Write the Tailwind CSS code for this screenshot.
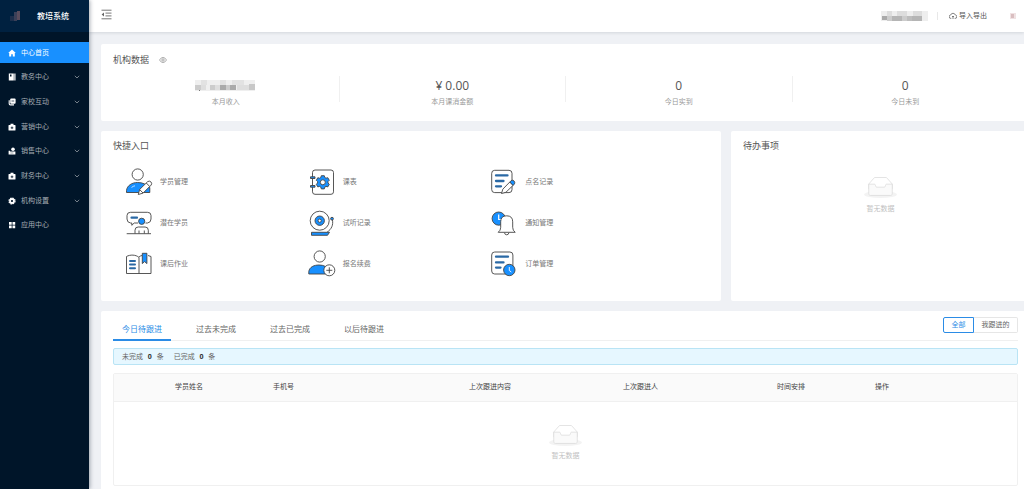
<!DOCTYPE html>
<html lang="zh-CN">
<head>
<meta charset="utf-8">
<title>教培系统</title>
<script src="https://cdn.jsdelivr.net/npm/@tailwindcss/browser@4"></script>
</head>
<body class="flex min-h-screen overflow-x-hidden bg-[#eff1f5] font-['Open_Sans','Noto_Sans_CJK_SC',sans-serif] text-[7px] leading-[12px] text-[#666]">

<svg class="hidden" aria-hidden="true">
  <symbol id="empty" viewBox="0 0 64 41">
    <g transform="translate(0 1)" fill="none">
      <ellipse fill="#f3f3f3" cx="32" cy="33" rx="32" ry="7"/>
      <g stroke="#d9d9d9" stroke-width="1.400">
        <path fill="#fff" d="M55 12.760L44.854 1.258C44.367.474 43.656 0 42.907 0H21.093c-.749 0-1.460.474-1.947 1.257L9 12.761V22h46v-9.240z"/>
        <path fill="#fafafa" d="M41.613 15.931c0-1.605.994-2.930 2.227-2.931H55v18.137C55 33.260 53.680 35 52.050 35h-40.100C10.320 35 9 33.259 9 31.137V13h11.160c1.233 0 2.227 1.323 2.227 2.928v.022c0 1.605 1.005 2.901 2.237 2.901h14.752c1.232 0 2.237-1.308 2.237-2.913v-.007z"/>
      </g>
    </g>
  </symbol>
  <symbol id="chev" viewBox="0 0 6 6"><path d="M.8 1.800L3 4l2.200-2.200" fill="none" stroke="currentColor" stroke-width=".7"/></symbol>
  <symbol id="bag" viewBox="0 0 8 8"><path d="M2.500 2V.8h3V2H7q.5 0 .5.500v4.500q0 .6-.6.6H1.100q-.6 0-.6-.6V2.500Q.5 2 1 2z" fill="currentColor"/><path d="M4 3.500v2.600M2.700 4.800h2.600" stroke="#001529" stroke-width=".8"/></symbol>
</svg>

<aside class="z-10 w-[89px] shrink-0 bg-[#001529] text-[#a6adb4] shadow-[1px_0_4px_rgba(0,21,41,0.35)]">
  <div class="flex h-8 items-center gap-4 bg-[#002140] pl-[10px] text-[8px] font-medium text-white">
    <svg class="size-[11px]" viewBox="0 0 11 11"><path fill="#1d2f4c" d="M0 5h4v5H0z"/><path fill="#3b4058" d="M4 1h3v9H4z"/><path fill="#594c5c" d="M7 0h3v9H7z"/></svg>
    <span>教培系统</span>
  </div>
  <nav class="mt-[10px]">
    <ul class="flex h-[194px] flex-col justify-between">
      <li><a href="#" class="flex h-[21px] items-center gap-[5px] bg-[#1890ff] pr-[9px] pl-2 text-white">
        <svg class="size-2" viewBox="0 0 8 8"><path fill="currentColor" d="M4 .4L.2 4h1v3.500h2V5.200h1.600v2.300h2V4h1z"/></svg><span>中心首页</span></a></li>
      <li><a href="#" class="flex h-[21px] items-center gap-[5px] pr-[9px] pl-2">
        <svg class="size-2 text-white" viewBox="0 0 8 8"><path fill="currentColor" d="M.8.6h5v6.900h-5zM6.300.6h1.200v6.900H6.300z"/><path fill="#001529" d="M2 1.500h1.500v2H2z"/></svg><span>教务中心</span><svg class="ml-auto size-[6px]"><use href="#chev"/></svg></a></li>
      <li><a href="#" class="flex h-[21px] items-center gap-[5px] pr-[9px] pl-2">
        <svg class="size-2 text-white" viewBox="0 0 8 8"><rect x="2.200" y=".5" width="5.400" height="5.200" rx="1" fill="currentColor"/><path d="M1.200 2.200v3.500q0 1.200 1.200 1.200h3.600" fill="none" stroke="currentColor" stroke-width="1.100"/><path d="M3.500 3h2.700" stroke="#001529" stroke-width=".7"/></svg><span>家校互动</span><svg class="ml-auto size-[6px]"><use href="#chev"/></svg></a></li>
      <li><a href="#" class="flex h-[21px] items-center gap-[5px] pr-[9px] pl-2">
        <svg class="size-2 text-white"><use href="#bag"/></svg><span>营销中心</span><svg class="ml-auto size-[6px]"><use href="#chev"/></svg></a></li>
      <li><a href="#" class="flex h-[21px] items-center gap-[5px] pr-[9px] pl-2">
        <svg class="size-2 text-white" viewBox="0 0 8 8"><circle cx="5" cy="2.300" r="1.800" fill="currentColor"/><path fill="currentColor" d="M.6 3.800h1.500v.8h5.300v2.900H.6z"/><path d="M2.400 6h3" stroke="#001529" stroke-width=".4"/></svg><span>销售中心</span><svg class="ml-auto size-[6px]"><use href="#chev"/></svg></a></li>
      <li><a href="#" class="flex h-[21px] items-center gap-[5px] pr-[9px] pl-2">
        <svg class="size-2 text-white"><use href="#bag"/></svg><span>财务中心</span><svg class="ml-auto size-[6px]"><use href="#chev"/></svg></a></li>
      <li><a href="#" class="flex h-[21px] items-center gap-[5px] pr-[9px] pl-2">
        <svg class="size-2 text-white" viewBox="0 0 8 8"><circle cx="4" cy="4" r="2" fill="none" stroke="currentColor" stroke-width="1.800"/><circle cx="4" cy="4" r="3" fill="none" stroke="currentColor" stroke-width="1.200" stroke-dasharray="1.570 .785"/></svg><span>机构设置</span><svg class="ml-auto size-[6px]"><use href="#chev"/></svg></a></li>
      <li><a href="#" class="flex h-[21px] items-center gap-[5px] pr-[9px] pl-2">
        <svg class="size-2 text-white" viewBox="0 0 8 8"><path fill="currentColor" d="M1 1h2.700v2.700H1zM4.500 1h2.700v2.700H4.500zM1 4.500h2.700v2.700H1zM4.500 4.500h2.700v2.700H4.500z"/></svg><span>应用中心</span></a></li>
    </ul>
  </nav>
</aside>

<div class="flex min-w-0 flex-1 flex-col">
  <header class="flex h-8 items-center bg-white pl-3 shadow-[0_1px_3px_rgba(0,21,41,0.12)]">
    <button type="button" aria-label="收起菜单" class="pb-[3px]"><svg class="size-[11px]" viewBox="0 0 11 11" fill="none" stroke="#666" stroke-width=".9"><path d="M.5 1.200h10M4.500 4.100h6M4.500 6.900h6M.5 9.800h10"/><path d="M3 3.500v4L.6 5.500z" fill="#666" stroke="none"/></svg></button>
    <svg class="ml-auto h-[10px] w-[47px]" viewBox="0 0 47 10"><path fill="#eee" d="M0 0h47v10H0z"/><path fill="#ddd" d="M6 0h5v5H6zM16 0h10v5H16zM32 0h9v5h-9z"/><path fill="#aaa" d="M1 5h5v4H1z"/><path fill="#ccc" d="M6 5h5v5H6zM21 5h5v5h-5z"/><path fill="#b5b5b5" d="M11 5h10v5H11zM31 5h10v5H31z"/><path fill="#bdbdbd" d="M26 5h5v5h-5z"/></svg>
    <span class="ml-[9px] h-2 w-px bg-[#e8e8e8]"></span>
    <a href="#" class="ml-[11px] flex items-center gap-[2px] text-[#555]"><svg class="size-2" viewBox="0 0 8 8" fill="none" stroke="currentColor" stroke-width=".7"><path d="M2.300 6.400H2A1.700 1.700 0 0 1 1.700 3a2.400 2.400 0 0 1 4.600 0A1.700 1.700 0 0 1 6 6.400h-.3M4 7V4M3 5l1-1 1 1"/></svg>导入导出</a>
    <svg class="mr-2 ml-[23px] h-[6px] w-[6px]" viewBox="0 0 6 6"><path fill="#f0e2e3" d="M0 0h6v6H0z"/><path fill="#d9bec0" d="M1 1h3v4H1z"/></svg>
  </header>

  <main class="flex flex-1 flex-col gap-[10px] pt-3 pl-3">
    <section class="rounded-l-xs bg-white pt-[10px] pr-[6px] pb-[13px] pl-3">
      <h2 class="flex items-center gap-[10px] text-[9px] text-[#555]">机构数据
        <button type="button" aria-label="显示或隐藏金额"><svg class="size-2" viewBox="0 0 8 8" fill="none" stroke="#777" stroke-width=".6"><path d="M.5 4Q2 1.400 4 1.400T7.500 4Q6 6.600 4 6.600T.5 4z"/><circle cx="4" cy="4" r="1.200"/></svg></button></h2>
      <div class="mt-[10px] flex text-center text-[#999]">
        <div class="flex-1 pt-[2px]"><div class="flex h-4 items-center justify-center"><svg class="h-3 w-[62px]" viewBox="0 0 62 12"><path fill="#efefef" d="M0 0h60v11H0z"/><path fill="#e2e2e2" d="M6 0h6v5H6zM25 0h6v5h-6zM37 0h12v5H37z"/><path fill="#ccc" d="M0 5h6v5H0zM15 5h5v5h-5zM31 5h4v5h-4z"/><path fill="#dedede" d="M6 5h5v5H6zM20 5h5v5h-5zM42 5h18v5H42z"/><path fill="#aaa" d="M25 5h6v5h-6zM35 5h6v5h-6z"/><path fill="#c8c8c8" d="M54 4h6v6h-6z"/><path fill="#777" d="M4 10h1v1H4z"/></svg></div><p class="mt-[2px]">本月收入</p></div>
        <span class="h-[26px] w-px bg-[#f0f0f0]"></span>
        <div class="flex-1 pt-[2px]"><p class="text-[12px] leading-4 text-[#555]">¥ 0.00</p><p class="mt-[2px]">本月课消金额</p></div>
        <span class="h-[26px] w-px bg-[#f0f0f0]"></span>
        <div class="flex-1 pt-[2px]"><p class="text-[12px] leading-4 text-[#555]">0</p><p class="mt-[2px]">今日实到</p></div>
        <span class="h-[26px] w-px bg-[#f0f0f0]"></span>
        <div class="flex-1 pt-[2px]"><p class="text-[12px] leading-4 text-[#555]">0</p><p class="mt-[2px]">今日未到</p></div>
      </div>
    </section>

    <div class="grid grid-cols-[620fr_293fr] gap-[10px]">
      <section class="rounded-xs bg-white px-3 pt-[9px] pb-[17px]">
        <h2 class="text-[9px] text-[#555]">快捷入口</h2>
        <div class="mt-[9px] grid auto-rows-[41px] grid-cols-3 pr-9 pl-3 text-[#777]">
          <a href="#" class="flex items-center gap-[7px]"><svg class="size-7" viewBox="0 0 28 28" fill="none" stroke="#444" stroke-width=".9"><circle cx="12.700" cy="6.500" r="5.600"/><path fill="#1890ff" d="M1.500 24.500v-2C2 17.500 7 14.500 12.500 14.500c5.500 0 9 2 12.300 5v5z"/><path d="M6.500 19.500q1.800-1.500 3.500-1.700" stroke="#fff" stroke-width=".7"/><path fill="#fff" d="M13.300 26.500l1.300-5 8.200-8q2-1 3.300.6 1.200 1.600 0 3l-8 8zM14.600 21.500l3.500 3.600M21.300 15l3.300 3.400"/></svg>学员管理</a>
          <a href="#" class="flex items-center gap-[7px]"><svg class="size-7" viewBox="0 0 28 28" fill="none" stroke="#444" stroke-width=".9"><rect x="4.500" y="2" width="21" height="24.300" rx="2.500"/><path fill="#1890ff" d="M2.500 8.800h4.500v1.700H2.500zM2.500 17.500h4.500v1.700H2.500z"/><path fill="#1890ff" d="M13.300 7.700h3l.5 1.800 1.200.7 1.800-.5 1.500 2.600-1.300 1.300v1.400l1.300 1.300-1.500 2.600-1.800-.5-1.200.7-.5 1.800h-3l-.5-1.800-1.200-.7-1.800.5-1.500-2.600 1.300-1.300v-1.400l-1.300-1.300 1.500-2.600 1.800.5 1.200-.7z"/><circle cx="14.800" cy="14.300" r="2.500" fill="#fff"/></svg>课表</a>
          <a href="#" class="flex items-center gap-[7px]"><svg class="size-7" viewBox="0 0 28 28" fill="none" stroke="#444" stroke-width=".9"><rect x="1.700" y="2.300" width="20.300" height="22.300" rx="3"/><g stroke-width="2.300" stroke-linecap="round" stroke="#2a69a5"><path d="M6 7.400h11.500M6 13h7.500M6 18.300h5"/></g><path fill="#fff" d="M11.500 25.500l1.300-4.300 7-7.200 3.300 3.300-7.200 7z"/><path fill="#1890ff" d="M19.800 14l1.400-1.400q1.500-1 2.800.3t.5 3L23 17.400z"/></svg>点名记录</a>

          <a href="#" class="flex items-center gap-[7px]"><svg class="size-7" viewBox="0 0 28 28" fill="none" stroke="#444" stroke-width=".9"><path d="M13 14H9.200l-2.400 2.300V14H5.500Q2 13.500 2 10V6.500Q2 3.300 5.500 3.300h17Q26 3.300 26 6.500V10q0 3.500-3.500 4h-2"/><path d="M6.500 8.700h5.500" stroke="#2a69a5" stroke-width="2.200" stroke-linecap="round"/><circle cx="16.700" cy="12.300" r="3.100" fill="#1890ff"/><path d="M10 24.500v-3.300q0-3.200 3.200-3.200h6.900q3.200 0 3.200 3.200v3.300M14 21.500v3M19.300 21.500v3M1.700 24.700H26"/></svg>潜在学员</a>
          <a href="#" class="flex items-center gap-[7px]"><svg class="size-7" viewBox="0 0 28 28" fill="none" stroke="#444" stroke-width=".9"><circle cx="11.700" cy="11.700" r="9.500"/><circle cx="11.700" cy="11.700" r="4.700" fill="#1890ff"/><circle cx="11.700" cy="11.700" r="1.600" fill="#fff"/><path d="M24.500 11c.8 5-.8 9-5.500 12.300"/><circle cx="24" cy="9.700" r="1.400" fill="#1890ff"/><path fill="#1890ff" d="M3.500 23.300h18l-2 3h-16z"/></svg>试听记录</a>
          <a href="#" class="flex items-center gap-[7px]"><svg class="size-7" viewBox="0 0 28 28" fill="none" stroke="#444" stroke-width=".9"><circle cx="8.700" cy="9.600" r="6.600" fill="#1890ff"/><path d="M8.700 5.500v5h3" stroke="#fff" stroke-width="1.200"/><path fill="#fff" d="M8.200 23.300q2.500-1.700 2.500-5v-5.500q0-6 6-6t6 6v5.500q0 3.300 2.500 5z"/><path d="M14.500 23.800q.3 2 2.200 2t2.200-2"/></svg>通知管理</a>

          <a href="#" class="flex items-center gap-[7px]"><svg class="size-7" viewBox="0 0 28 28" fill="none" stroke="#444" stroke-width=".9"><path d="M14 7.500C11 4.500 5 4.500 1.500 6.500V23.500H26V6.500l-3-1M14 7.500V23.500M14 7q1.300-1.200 3-1.500"/><path d="M5 11h5M5 14.600h5M5 18.200h5" stroke="#2a69a5" stroke-width="2" stroke-linecap="round"/><path fill="#1890ff" d="M17.300 3.300h4.600v10.300l-2.300-2-2.300 2z"/></svg>课后作业</a>
          <a href="#" class="flex items-center gap-[7px]"><svg class="size-7" viewBox="0 0 28 28" fill="none" stroke="#444" stroke-width=".9"><circle cx="11.700" cy="6.500" r="5.600"/><path fill="#1890ff" d="M.8 24v-2.500C1.500 17 6 15 11 15c5 0 8 2 9.500 4.500V24z"/><circle cx="21.300" cy="20.300" r="5.500" fill="#fff"/><path d="M21.300 17.300v6M18.300 20.300h6"/></svg>报名续费</a>
          <a href="#" class="flex items-center gap-[7px]"><svg class="size-7" viewBox="0 0 28 28" fill="none" stroke="#444" stroke-width=".9"><rect x="1.700" y="2" width="21.200" height="22" rx="3"/><path d="M6 6.700h12M6 12.400h7.500M6 17.600h4.500" stroke="#2a69a5" stroke-width="2.300" stroke-linecap="round"/><circle cx="19.300" cy="20" r="5.700" fill="#1890ff"/><path d="M19.300 17v3.500l2 1.500" stroke="#fff"/></svg>订单管理</a>
        </div>
      </section>

      <section class="rounded-l-xs bg-white pt-[9px] pr-[6px] pl-3">
        <h2 class="text-[9px] text-[#555]">待办事项</h2>
        <div class="mt-[25px] flex flex-col items-center gap-[5px] text-[#bfbfbf]"><svg class="h-[21px] w-[33px]"><use href="#empty"/></svg><p>暂无数据</p></div>
      </section>
    </div>

    <section class="flex-1 rounded-tl-xs bg-white pt-[6px] pr-[6px] pb-[3px] pl-3">
      <div class="flex h-6 items-start border-b border-[#f0f0f0]">
        <div role="tablist" class="flex h-6 gap-4 text-[8px]">
          <button role="tab" aria-selected="true" type="button" class="w-[58px] border-b-2 border-[#2b8ce6] pt-[2px] text-[#2b8ce6]">今日待跟进</button>
          <button role="tab" aria-selected="false" type="button" class="w-[58px] border-b-2 border-transparent pt-[2px]">过去未完成</button>
          <button role="tab" aria-selected="false" type="button" class="w-[58px] border-b-2 border-transparent pt-[2px]">过去已完成</button>
          <button role="tab" aria-selected="false" type="button" class="w-[58px] border-b-2 border-transparent pt-[2px]">以后待跟进</button>
        </div>
        <div class="ml-auto flex h-4">
          <button type="button" class="w-[31px] rounded-l-xs border border-[#2b8ce6] text-[#2b8ce6]">全部</button>
          <button type="button" class="w-11 rounded-r-xs border border-l-0 border-[#e6e6e6]">我跟进的</button>
        </div>
      </div>
      <div class="mt-[7px] flex h-[17px] items-center gap-[10px] rounded-xs border border-[#b9e4f5] bg-[#e6f7ff] pl-2">
        <p>未完成 <b class="mx-[3px] text-[#333]">0</b> 条</p>
        <p>已完成 <b class="mx-[3px] text-[#333]">0</b> 条</p>
      </div>
      <div class="mt-2 rounded-xs border border-[#f0f0f0]">
        <table class="w-full table-fixed text-left text-[#444]">
          <colgroup><col class="w-[56px]"><col class="w-[98px]"><col class="w-[196px]"><col class="w-[154px]"><col class="w-[154px]"><col class="w-[98px]"><col></colgroup>
          <thead><tr class="h-[27px] border-b border-[#f0f0f0] bg-[#fafafa]">
            <td></td><th class="pl-[5px] font-normal">学员姓名</th><th class="pl-[5px] font-normal">手机号</th><th class="pl-[5px] font-normal">上次跟进内容</th><th class="pl-[5px] font-normal">上次跟进人</th><th class="pl-[5px] font-normal">时间安排</th><th class="pl-[5px] font-normal">操作</th>
          </tr></thead>
          <tbody><tr><td colspan="7" class="pt-[23px] pb-[23px] text-[#bfbfbf]">
            <div class="flex flex-col items-center gap-[4px]"><svg class="h-[21px] w-[33px]"><use href="#empty"/></svg><p>暂无数据</p></div>
          </td></tr></tbody>
        </table>
      </div>
    </section>
  </main>
</div>
</body>
</html>
